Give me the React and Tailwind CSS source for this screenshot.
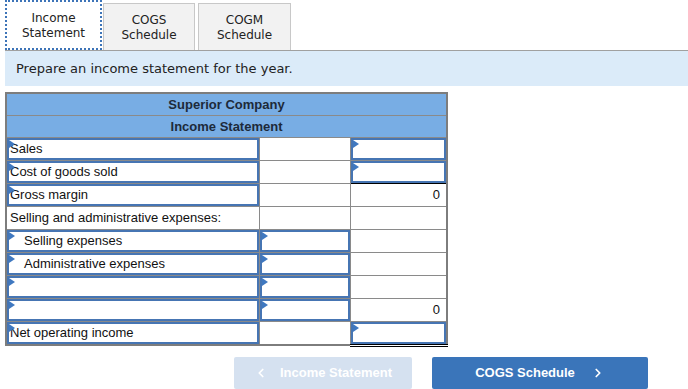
import { ChevronLeft, ChevronRight } from 'lucide-react'

const rows = [
  { label: 'Sales', labelInput: true, c2: null, c3: { input: true } },
  { label: 'Cost of goods sold', labelInput: true, c2: null, c3: { input: true, under: 'single' } },
  { label: 'Gross margin', labelInput: true, c2: null, c3: { value: '0' } },
  { label: 'Selling and administrative expenses:', c2: null, c3: null },
  { label: 'Selling expenses', labelInput: true, indent: true, c2: { input: true }, c3: null },
  { label: 'Administrative expenses', labelInput: true, indent: true, c2: { input: true }, c3: null },
  { label: '', labelInput: true, c2: { input: true }, c3: null },
  { label: '', labelInput: true, c2: { input: true }, c3: { value: '0' } },
  { label: 'Net operating income', labelInput: true, c2: null, c3: { input: true, under: 'double' } },
]

function Arrow() {
  return (
    <span className="absolute left-0 top-0 w-0 h-0 border-t-[4px] border-b-[4px] border-l-[6px] border-t-transparent border-b-transparent border-l-[#3f78c0]" />
  )
}

function InputBox({ children }) {
  return (
    <div className="relative h-[22px] border-2 border-[#4675b3] bg-white">
      <Arrow />
      {children}
    </div>
  )
}

const cellBase = 'border border-[#8a8a8a] p-0 h-[22px] leading-[18px]'

function NumCell({ cell }) {
  if (!cell) return <td className={cellBase} />
  const under =
    cell.under === 'double'
      ? 'border-b-[3px] border-b-black border-double'
      : cell.under === 'single'
      ? 'border-b border-b-black'
      : ''
  if (cell.input) {
    return (
      <td className={`${cellBase} ${under}`}>
        <InputBox />
      </td>
    )
  }
  return <td className={`${cellBase} pr-[6px] pt-[1px] text-right align-middle`}>{cell.value}</td>
}

export default function App() {
  return (
    <div className="w-[688px] h-[389px] bg-white overflow-hidden text-[#222]">
      {/* tabs */}
      <div className="flex items-end pl-[5px] h-[50px] font-['DejaVu_Sans','Liberation_Sans',sans-serif] text-[12px] leading-[15px]">
        <div className="w-[97px] h-[50px] pt-[2px] border-2 border-dotted border-[#3d74b8] bg-white flex items-center justify-center text-center">
          Income<br />Statement
        </div>
        <div className="ml-[1px] w-[92px] h-[47px] pt-[1px] border border-b-0 border-[#c8c8c8] bg-[#f2f2f2] flex items-center justify-center text-center">
          COGS<br />Schedule
        </div>
        <div className="ml-[3px] w-[93px] h-[47px] pt-[1px] border border-b-0 border-[#c8c8c8] bg-[#f2f2f2] flex items-center justify-center text-center">
          COGM<br />Schedule
        </div>
      </div>

      {/* instruction */}
      <div className="ml-[5px] h-[36px] bg-[#dbebf9] border-t border-[#a0a0a0] flex items-center pl-[11px] font-['DejaVu_Sans','Liberation_Sans',sans-serif] text-[13px]">
        Prepare an income statement for the year.
      </div>

      {/* statement */}
      <table className="ml-[5px] mt-[6px] w-[441px] border-collapse border-2 border-[#7d7d7d] font-['Liberation_Sans',Arial,sans-serif] text-[13px] text-[#111] table-fixed">
        <colgroup>
          <col className="w-[253px]" />
          <col className="w-[91px]" />
          <col className="w-[97px]" />
        </colgroup>
        <tbody>
          <tr>
            <td colSpan={3} className={`${cellBase} pt-[1px] bg-[#78ade4] text-center font-bold text-[#1d2a3a]`}>
              Superior Company
            </td>
          </tr>
          <tr>
            <td colSpan={3} className={`${cellBase} pt-[1px] bg-[#78ade4] text-center font-bold text-[#1d2a3a]`}>
              Income Statement
            </td>
          </tr>
          {rows.map((r, i) => (
            <tr key={i}>
              <td className={cellBase}>
                {r.labelInput ? (
                  <InputBox>
                    <div className={`h-full pt-[1px] flex items-center ${r.indent ? 'pl-[15px]' : 'pl-[1px]'}`}>{r.label}</div>
                  </InputBox>
                ) : (
                  <div className="h-[22px] pt-[1px] flex items-center pl-[3px]">{r.label}</div>
                )}
              </td>
              <NumCell cell={r.c2} />
              <NumCell cell={r.c3} />
            </tr>
          ))}
        </tbody>
      </table>

      {/* nav buttons */}
      <div className="flex mt-[10px] ml-[234px] gap-[20px] font-['Liberation_Sans',Arial,sans-serif] text-[13px] font-bold text-white">
        <button className="w-[178px] h-[32px] rounded-[2px] bg-[#d5e1f0] flex items-center justify-center gap-[12px]">
          <ChevronLeft size={14} strokeWidth={3} />
          <span>Income Statement</span>
        </button>
        <button className="w-[216px] h-[32px] rounded-[2px] bg-[#3a75ba] flex items-center justify-center gap-[16px]">
          <span>COGS Schedule</span>
          <ChevronRight size={14} strokeWidth={3} />
        </button>
      </div>
    </div>
  )
}
